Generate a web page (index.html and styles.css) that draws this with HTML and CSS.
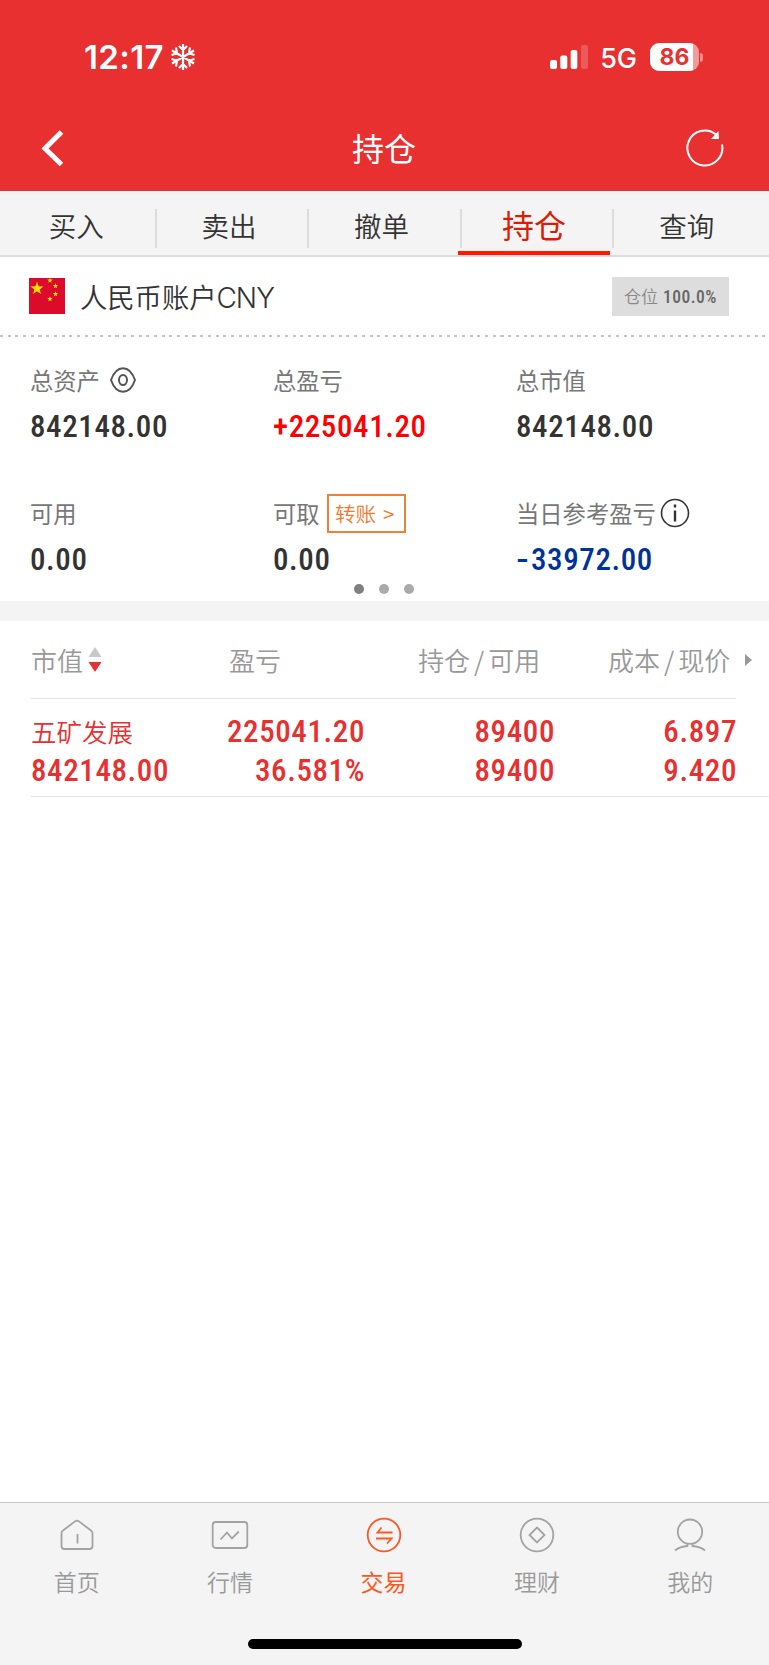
FILE: index.html
```
<!doctype html>
<html lang="zh-CN">
<head>
    <meta charset="UTF-8">
    <meta name="viewport" content="width=device-width, initial-scale=1.0">
    <link rel="stylesheet" href="styles.css">
    <title>持仓</title>
</head>
<body>
    <header class="header">
        <div class="status">
            <span class="time">12:17</span>
            <svg class="snow" width="26" height="28" viewBox="0 0 26 28">
                <path d="M13 1v26M2 7.5l22 13M24 7.5l-22 13M9 3l4 4 4-4M9 25l4-4 4 4M1.5 12l5.5-1.8L6 4.5M24.5 12L19 10.2l1-5.7M1.5 16L7 17.8l-1 5.7M24.5 16L19 17.8l1 5.7"/>
            </svg>
            <svg class="signal" width="40" height="26" viewBox="0 0 40 26">
                <rect x="1" y="16" width="7" height="9" rx="2"/>
                <rect x="11.3" y="11.5" width="7" height="13.5" rx="2"/>
                <rect x="21.7" y="6" width="6.6" height="19" rx="2"/>
                <rect x="32" y="1" width="7" height="24" rx="2" opacity=".2"/>
            </svg>
            <span class="net">5G</span>
            <span class="battery">86</span>
            <span class="battery-tip"></span>
        </div>
        <div class="titlebar">
            <svg class="back" width="24" height="38" viewBox="0 0 24 38">
                <path d="M20.5 3L4 19.5 20.5 35.5"/>
            </svg>
            <h1>持仓</h1>
            <svg class="refresh" width="40" height="40" viewBox="0 0 40 40">
                <path class="ring" d="M31 6.500A17.500 17.500 0 1 0 37 16.500"/>
                <path class="tip" d="M33.500 3l.5 8h-8z"/>
            </svg>
        </div>
    </header>

    <nav class="tabs">
        <a>买入</a>
        <a>卖出</a>
        <a>撤单</a>
        <a class="active">持仓</a>
        <a>查询</a>
    </nav>

    <section class="account">
        <svg class="flag" width="36" height="36" viewBox="0 0 36 36">
            <defs>
                <path id="star" d="M0-6.8L1.6-2.2 6.5-2.1 2.6.9 4 5.5 0 2.8-4 5.5-2.6.9-6.5-2.1-1.6-2.2z"/>
            </defs>
            <rect width="36" height="36" fill="#dc0a2b"/>
            <g fill="#ffe200">
                <use href="#star" x="8" y="10.5"/>
                <use href="#star" transform="translate(21 2.5) scale(.42)"/>
                <use href="#star" transform="translate(26.5 8) scale(.42)"/>
                <use href="#star" transform="translate(26.5 16) scale(.42)"/>
                <use href="#star" transform="translate(21 21) scale(.42)"/>
            </g>
        </svg>
        <span class="name">人民币账户<span>CNY</span></span>
        <span class="ratio">仓位 <b>100.0%</b></span>
    </section>

    <section class="summary">
        <div class="item">
            <div class="label">总资产
                <svg class="eye" width="26" height="26" viewBox="0 0 26 26">
                    <path d="M1 13C4 4.5 8 1.2 13 1.2S22 4.5 25 13C22 21.5 18 24.8 13 24.8S4 21.5 1 13z"/>
                    <ellipse cx="13" cy="13" rx="4" ry="5"/>
                </svg>
            </div>
            <div class="num">842148.00</div>
        </div>
        <div class="item">
            <div class="label">总盈亏</div>
            <div class="num up">+225041.20</div>
        </div>
        <div class="item">
            <div class="label">总市值</div>
            <div class="num">842148.00</div>
        </div>
        <div class="item">
            <div class="label">可用</div>
            <div class="num">0.00</div>
        </div>
        <div class="item">
            <div class="label">可取<a class="transfer">转账 &gt;</a></div>
            <div class="num">0.00</div>
        </div>
        <div class="item">
            <div class="label">当日参考盈亏
                <svg class="info" width="30" height="30" viewBox="0 0 30 30">
                    <circle cx="15" cy="15" r="13.5"/>
                    <path d="M15 12.5V23.5M15 6.5v3"/>
                </svg>
            </div>
            <div class="num down"><span class="minus">-</span>33972.00</div>
        </div>
    </section>
    <div class="dots"><i class="on"></i><i></i><i></i></div>

    <section class="list">
        <div class="row head">
            <div>市值
                <svg class="sort" width="14" height="26" viewBox="0 0 14 26">
                    <path d="M7 0l6.5 10H.5z" fill="#c8c8c8"/>
                    <path d="M7 25L.5 15h13z" fill="#e93030"/>
                </svg>
            </div>
            <div>盈亏</div>
            <div>持仓<em>/</em>可用</div>
            <div>成本<em>/</em>现价
                <svg class="more" width="7" height="12" viewBox="0 0 7 12"><path d="M0 0l7 6-7 6z" fill="#999"/></svg>
            </div>
        </div>
        <div class="row stock">
            <div><span class="stock-name">五矿发展</span><span class="num">842148.00</span></div>
            <div><span class="num">225041.20</span><span class="num">36.581%</span></div>
            <div><span class="num">89400</span><span class="num">89400</span></div>
            <div><span class="num">6.897</span><span class="num">9.420</span></div>
        </div>
    </section>

    <footer class="footer">
        <nav class="menu">
            <a>
                <svg width="38" height="38" viewBox="0 0 38 38"><path d="M3.5 17.2Q3.5 15.5 5 14.5L17 5.4Q19 4 21 5.4L33 14.5Q34.5 15.5 34.5 17.2V30Q34.5 33 31.5 33H6.5Q3.5 33 3.5 30zM19.5 18v9.5"/></svg>
                首页
            </a>
            <a>
                <svg width="38" height="38" viewBox="0 0 38 38"><rect x="1.7" y="6" width="34.6" height="26" rx="3"/><path d="M9.5 23.5l6.5-7 5 6 6.8-7"/></svg>
                行情
            </a>
            <a class="active">
                <svg width="38" height="38" viewBox="0 0 38 38"><circle cx="19" cy="19" r="16.3"/><path d="M27.5 16.5H12.5l4-5M11 22.5h15.5l-4.5 5"/></svg>
                交易
            </a>
            <a>
                <svg width="38" height="38" viewBox="0 0 38 38"><circle cx="19" cy="19" r="16.3"/><path d="M19 11.5l7.5 7.5-7.5 7.5-7.5-7.5z"/></svg>
                理财
            </a>
            <a>
                <svg width="38" height="38" viewBox="0 0 38 38"><circle cx="19" cy="15.7" r="12.2"/><path d="M16.5 27.5v2.5Q9 30.5 4 34.5M21.5 27.5v2.5Q29 30.5 34 34.5"/></svg>
                我的
            </a>
        </nav>
        <div class="home-bar"></div>
    </footer>
</body>
</html>
```
FILE: styles.css
```
*{
    box-sizing: border-box;
}
body{
    margin: 0;
    height: 1665px;
    display: flex;
    flex-direction: column;
    background: #fff;
    color: #333;
    font-family: "Noto Sans CJK SC", sans-serif;
    font-weight: 350;
}
svg{
    flex: none;
    fill: none;
}

/* 顶部 */
.header{
    height: 191px;
    background: #e93030;
    color: #fff;
}
.status{
    height: 114px;
    padding: 0 66px 0 84px;
    display: flex;
    align-items: center;
    font-family: Inter, sans-serif;
}
.time{
    width: 80px;
    font-size: 33px;
    font-weight: 600;
    letter-spacing: 0.4px;
}
.snow{
    margin-left: 6px;
    stroke: #fff;
    stroke-width: 2.2;
}
.signal{
    margin-left: auto;
    fill: #fff;
}
.net{
    margin-left: 11px;
    padding-top: 2px;
    font-size: 27px;
    font-weight: 500;
}
.battery{
    width: 49px;
    height: 28px;
    margin-left: 13px;
    border-radius: 9px;
    background: linear-gradient(90deg, #fff 43px, #f59a9a 43px);
    color: #e93030;
    font-size: 23px;
    font-weight: 700;
    line-height: 28px;
    text-align: center;
}
.battery-tip{
    width: 3px;
    height: 9px;
    margin-left: 1px;
    border-radius: 0 3px 3px 0;
    background: #f28a8a;
}
.titlebar{
    height: 68px;
    padding: 0 44px 0 41px;
    display: flex;
    align-items: center;
}
.titlebar h1{
    flex: 1;
    margin: 0;
    padding: 0 0 3px 18px;
    font-size: 32px;
    font-weight: 400;
    line-height: 48px;
    text-align: center;
}
.back{
    stroke: #fff;
    stroke-width: 5;
}
.ring{
    stroke: #fff;
    stroke-width: 2;
}
.tip{
    fill: #fff;
}

/* 交易标签 */
.tabs{
    height: 66px;
    padding-right: 6px;
    display: flex;
    background: #f4f4f4;
    border-bottom: 2px solid #dcdcdc;
}
.tabs a{
    position: relative;
    flex: 1;
    display: flex;
    align-items: center;
    justify-content: center;
    padding-top: 7px;
    font-size: 27.5px;
    border-bottom: 4px solid transparent;
}
.tabs a:not(:last-child)::after{
    content: "";
    position: absolute;
    right: -4px;
    top: 18px;
    width: 2px;
    height: 39px;
    background: #dcdcdc;
}
.tabs .active{
    padding-top: 5px;
    color: #d81e06;
    font-size: 32px;
    font-weight: 400;
    border-color: #ff1a00;
}

/* 账户 */
.account{
    height: 80px;
    padding: 0 40px 2px 29px;
    display: flex;
    align-items: center;
    background: repeating-linear-gradient(90deg, #c4c4c4 0 3px, transparent 3px 7.7px) 0 100% / 100% 2px no-repeat;
}
.name{
    margin-left: 15px;
    padding-bottom: 1px;
    font-size: 27.3px;
}
.name span{
    font-family: Inter, sans-serif;
    font-size: 28px;
    font-weight: 300;
    letter-spacing: -1px;
}
.ratio{
    width: 117px;
    height: 39px;
    margin-left: auto;
    background: #ddd;
    color: #888;
    font-size: 17px;
    line-height: 38px;
    text-align: center;
}
.ratio b{
    margin-left: 1px;
    color: #666;
    font-family: Roboto, sans-serif;
    font-size: 17.5px;
    font-stretch: 85%;
    font-weight: 500;
    letter-spacing: 0.5px;
}

/* 资产 */
.summary{
    height: 244px;
    padding: 18px 0 0 30px;
    display: grid;
    grid-template-columns: 243px 243px 1fr;
    grid-auto-rows: 133px;
}
.label{
    height: 52px;
    padding-bottom: 2px;
    display: flex;
    align-items: center;
    color: #777;
    font-size: 23.3px;
    font-weight: 400;
    line-height: 34px;
    white-space: nowrap;
}
.eye{
    margin-left: 10px;
    stroke: #555;
    stroke-width: 2;
}
.info{
    margin-left: 4px;
    stroke: #333;
    stroke-width: 1.6;
}
.info path{
    stroke-width: 2.4;
}
.transfer{
    height: 39px;
    width: 79px;
    margin-left: 7px;
    padding-right: 3px;
    border: 2px solid #f08033;
    color: #f07a2b;
    font-size: 20.7px;
    font-weight: 350;
    line-height: 34px;
    text-align: center;
    word-spacing: 2px;
}
.num{
    height: 40px;
    line-height: 40px;
    font-family: Roboto, sans-serif;
    font-size: 31px;
    font-stretch: 85%;
    font-weight: 500;
    letter-spacing: 0.6px;
}
.up{
    color: #ff0000;
}
.down{
    color: #003399;
}
.minus{
    display: inline-block;
    width: 15px;
    transform: scaleX(1.35);
    transform-origin: left;
}
.dots{
    height: 40px;
    padding: 3px 1px 0 0;
    display: flex;
    justify-content: center;
    gap: 15px;
    border-bottom: 20px solid #f4f4f4;
}
.dots i{
    width: 10px;
    height: 10px;
    border-radius: 50%;
    background: #aaa;
}
.dots .on{
    background: #808080;
}

/* 持仓列表 */
.list{
    flex: 1;
    padding-left: 31px;
}
.row{
    display: grid;
    grid-template-columns: 148px 186px 190px 1fr;
    border-bottom: 1px solid #e4e4e4;
}
.head{
    height: 78px;
    width: 705px;
    color: #999;
    font-size: 26px;
    white-space: nowrap;
}
.head div{
    display: flex;
    align-items: center;
}
.head div:nth-child(2){
    padding-left: 50px;
}
.head div:nth-child(3){
    padding-left: 53px;
}
.head div:nth-child(4){
    padding-left: 53px;
}
.head em{
    margin: 0 4px;
    font-style: normal;
}
.sort{
    margin-left: 5px;
}
.more{
    margin-left: 15px;
}
.stock{
    height: 98px;
    padding: 12px 32px 0 0;
    color: #e93030;
}
.stock div{
    display: flex;
    flex-direction: column;
    align-items: flex-end;
}
.stock div:first-child{
    align-items: flex-start;
}
.stock .num{
    height: 39px;
    line-height: 41px;
}
.stock-name{
    height: 39px;
    line-height: 40px;
    font-size: 25.5px;
    font-weight: 350;
}

/* 底部导航 */
.footer{
    height: 163px;
    background: #f4f4f4;
    border-top: 1px solid #c8c8c8;
}
.menu{
    height: 136px;
    padding: 13px 2px 0 0;
    display: flex;
}
.menu a{
    flex: 1;
    display: flex;
    flex-direction: column;
    align-items: center;
    color: #999;
    font-size: 23px;
    line-height: 54px;
}
.menu svg{
    stroke: #a3a3a3;
    stroke-width: 1.8;
}
.menu .active{
    color: #ff5722;
    font-weight: 400;
}
.menu .active svg{
    stroke: #ff5722;
}
.home-bar{
    width: 274px;
    height: 10px;
    margin: 0 auto;
    border-radius: 5px;
    background: #000;
}
```
